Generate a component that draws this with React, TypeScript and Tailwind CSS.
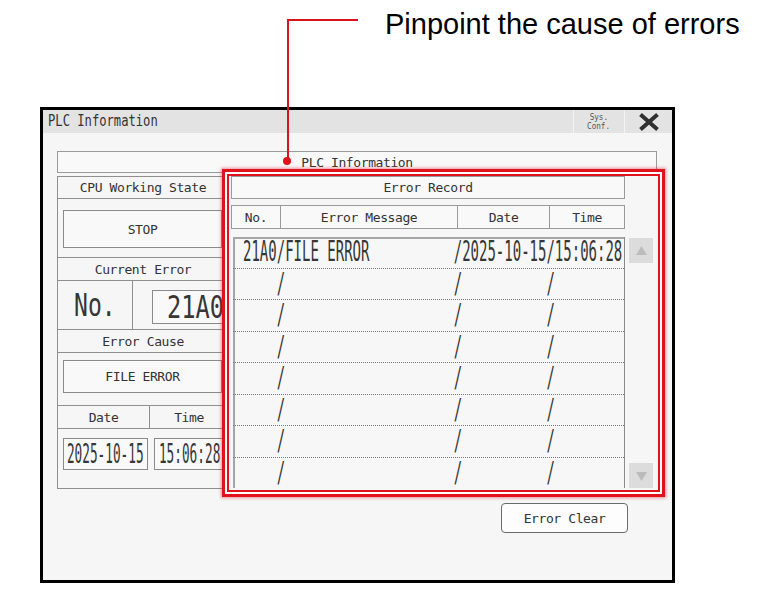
import React from "react";

const EMPTY_ROW = "    /                    /          /";
const ROWS = [
  "21A0/FILE ERROR          /2025-10-15/15:06:28",
  EMPTY_ROW,
  EMPTY_ROW,
  EMPTY_ROW,
  EMPTY_ROW,
  EMPTY_ROW,
  EMPTY_ROW,
  EMPTY_ROW,
];

function Label({ children }: { children: React.ReactNode }) {
  return (
    <span className="text-[13px] leading-none tracking-[-0.4px] text-[#333] whitespace-pre">
      {children}
    </span>
  );
}

// Narrow display text used for the HMI value fields
function Narrow({ children, className }: { children: React.ReactNode; className: string }) {
  return (
    <span className={`inline-block leading-none whitespace-pre text-[#363636] ${className}`}>
      {children}
    </span>
  );
}

function SectionHeader({ children, className }: { children: React.ReactNode; className: string }) {
  return (
    <div className={`border-b border-[#8f8f8f] flex items-center justify-center ${className}`}>
      <Label>{children}</Label>
    </div>
  );
}

function TitleBar() {
  return (
    <div className="h-[23px] bg-[#e3e3e3] flex items-stretch">
      <div className="flex-1 min-w-0 pl-[5px] flex items-center">
        <span className="inline-block origin-left scale-x-[0.81] text-[15px] leading-none text-[#333]">
          PLC Information
        </span>
      </div>
      <div className="w-[51px] shrink-0 border-l border-[#f4f4f4] flex flex-col items-center justify-center text-[9px] leading-[9px] text-[#555]">
        <span className="inline-block scale-x-[0.85]">Sys.</span>
        <span className="inline-block scale-x-[0.85]">Conf.</span>
      </div>
      <div className="w-[48px] shrink-0 border-l border-[#f4f4f4] flex items-center justify-center">
        <svg width="22" height="18" viewBox="0 0 22 18">
          <path d="M2.5 1.5 L19.5 16.5 M19.5 1.5 L2.5 16.5" stroke="#303030" strokeWidth="4" fill="none" />
        </svg>
      </div>
    </div>
  );
}

function LeftPanel() {
  return (
    <div className="w-[172px] h-[313px] border border-[#8f8f8f] flex flex-col shrink-0">
      <SectionHeader className="h-[22px] shrink-0">CPU Working State</SectionHeader>
      <div className="h-[59px] shrink-0 border-b border-[#8f8f8f] px-[5px] pt-[11px]">
        <div className="h-[38px] w-[159px] border border-[#8a8a8a] bg-[#f9f9f9] flex items-center justify-center">
          <Label>STOP</Label>
        </div>
      </div>
      <SectionHeader className="h-[23px] shrink-0">Current Error</SectionHeader>
      <div className="h-[49px] shrink-0 border-b border-[#8f8f8f] flex">
        <div className="w-[75px] shrink-0 border-r border-[#8f8f8f] flex items-center justify-center">
          <Narrow className="text-[32px] scale-x-[0.72]">No.</Narrow>
        </div>
        <div className="flex-1 min-w-0 pl-[19px] pt-[9px]">
          <div className="h-[34px] w-[76px] border border-[#8a8a8a] bg-[#f9f9f9] pl-[14px] flex items-center">
            <Narrow className="text-[32px] origin-left scale-x-[0.74]">21A0</Narrow>
          </div>
        </div>
      </div>
      <SectionHeader className="h-[23px] shrink-0">Error Cause</SectionHeader>
      <div className="h-[53px] shrink-0 border-b border-[#8f8f8f] px-[5px] pt-[7px]">
        <div className="h-[33px] w-[159px] border border-[#8a8a8a] bg-[#f9f9f9] flex items-center justify-center">
          <Label>FILE ERROR</Label>
        </div>
      </div>
      <div className="h-[23px] shrink-0 border-b border-[#8f8f8f] flex">
        <div className="w-[92px] shrink-0 border-r border-[#8f8f8f] flex items-center justify-center">
          <Label>Date</Label>
        </div>
        <div className="flex-1 min-w-0 flex items-center justify-center">
          <Label>Time</Label>
        </div>
      </div>
      <div className="flex-1 flex gap-[6px] px-[5px] pt-[9px]">
        <div className="h-[32px] w-[85px] shrink-0 border border-[#8a8a8a] bg-[#f9f9f9] flex items-center justify-center">
          <Narrow className="text-[26px] scale-x-[0.49]">2025-10-15</Narrow>
        </div>
        <div className="h-[32px] w-[72px] shrink-0 border border-[#8a8a8a] bg-[#f9f9f9] flex items-center justify-center">
          <Narrow className="text-[26px] scale-x-[0.49]">15:06:28</Narrow>
        </div>
      </div>
    </div>
  );
}

function ScrollButton({ down }: { down?: boolean }) {
  return (
    <div className="h-[25px] w-[24px] bg-[#dcdcdc] flex items-center justify-center">
      <svg width="11" height="10" viewBox="0 0 11 10">
        {down ? (
          <path d="M0 1 L11 1 L5.5 10 Z" fill="#bcbcbc" />
        ) : (
          <path d="M0 9 L11 9 L5.5 0 Z" fill="#bcbcbc" />
        )}
      </svg>
    </div>
  );
}

function RightPanel() {
  return (
    <div className="flex flex-col">
      <div className="w-[394px] h-[23px] border border-[#9a9a9a] bg-[#f9f9f9] flex items-center justify-center">
        <Label>Error Record</Label>
      </div>
      <div className="mt-[6px] w-[394px] h-[24px] border border-[#9a9a9a] bg-[#f9f9f9] flex">
        <div className="w-[49px] shrink-0 border-r border-[#9a9a9a] flex items-center justify-center">
          <Label>No.</Label>
        </div>
        <div className="w-[177px] shrink-0 border-r border-[#9a9a9a] flex items-center justify-center">
          <Label>Error Message</Label>
        </div>
        <div className="w-[92px] shrink-0 border-r border-[#9a9a9a] flex items-center justify-center">
          <Label>Date</Label>
        </div>
        <div className="flex-1 min-w-0 flex items-center justify-center">
          <Label>Time</Label>
        </div>
      </div>
      <div className="mt-[8px] flex">
        <div className="ml-[2px] w-[392px] shrink-0 h-[251px] border-r border-[#8a8a8a] bg-[#f7f7f7] shadow-[inset_2px_2px_0_#a6a6a6] flex flex-col">
          {ROWS.map((row, i) => (
            <div
              key={i}
              className={`flex-1 flex items-center pl-[10px] ${
                i < ROWS.length - 1 ? "border-b border-dotted border-[#7a7a7a]" : ""
              }`}
            >
              <Narrow className="text-[28px] origin-left scale-x-[0.5]">{row}</Narrow>
            </div>
          ))}
        </div>
        <div className="ml-[4px] w-[24px] shrink-0 h-[251px] flex flex-col justify-between pt-[1px]">
          <ScrollButton />
          <ScrollButton down />
        </div>
      </div>
    </div>
  );
}

function Frame() {
  return (
    <div className="ml-[40px] w-[635px] h-[476px] border-[3px] border-black bg-[#f6f6f6] flex flex-col">
      <TitleBar />
      <div className="pl-[14px] pt-[18px]">
        <div className="w-[600px] h-[22px] border border-[#9a9a9a] bg-[#f9f9f9] flex items-center justify-center">
          <Label>PLC Information</Label>
        </div>
        <div className="mt-[3px] flex gap-[2px]">
          <LeftPanel />
          <RightPanel />
        </div>
        <div className="mt-[14px] w-[600px] flex justify-end pr-[29px]">
          <div className="w-[127px] h-[30px] rounded-[4px] border border-[#6a6a6a] bg-[#fdfdfd] flex items-center justify-center">
            <Label>Error Clear</Label>
          </div>
        </div>
      </div>
    </div>
  );
}

export default function App() {
  return (
    <div className="relative w-[780px] h-[598px] bg-white overflow-hidden font-['DejaVu_Sans_Mono',monospace]">
      <div className="h-[107px] pl-[385px] pt-[10px] font-['Liberation_Sans',Arial,sans-serif] text-[29px] leading-none text-black">
        Pinpoint the cause of errors
      </div>
      <Frame />

      {/* callout leader line */}
      <div className="absolute left-[287px] top-[19px] w-[71px] h-[2px] bg-[#d7141e]" />
      <div className="absolute left-[287px] top-[19px] w-[2px] h-[140px] bg-[#d7141e]" />
      <div className="absolute left-[283px] top-[157px] w-[8px] h-[8px] rounded-full bg-[#e0121c]" />

      {/* highlight around the error record */}
      <div className="absolute left-[222px] top-[169px] w-[443px] h-[328px] border-[3px] border-[#e0121c] shadow-[0_0_3px_1px_rgba(225,20,40,0.45),inset_0_0_0_2px_#ffffff,inset_0_0_0_4px_#e0121c]" />
    </div>
  );
}
